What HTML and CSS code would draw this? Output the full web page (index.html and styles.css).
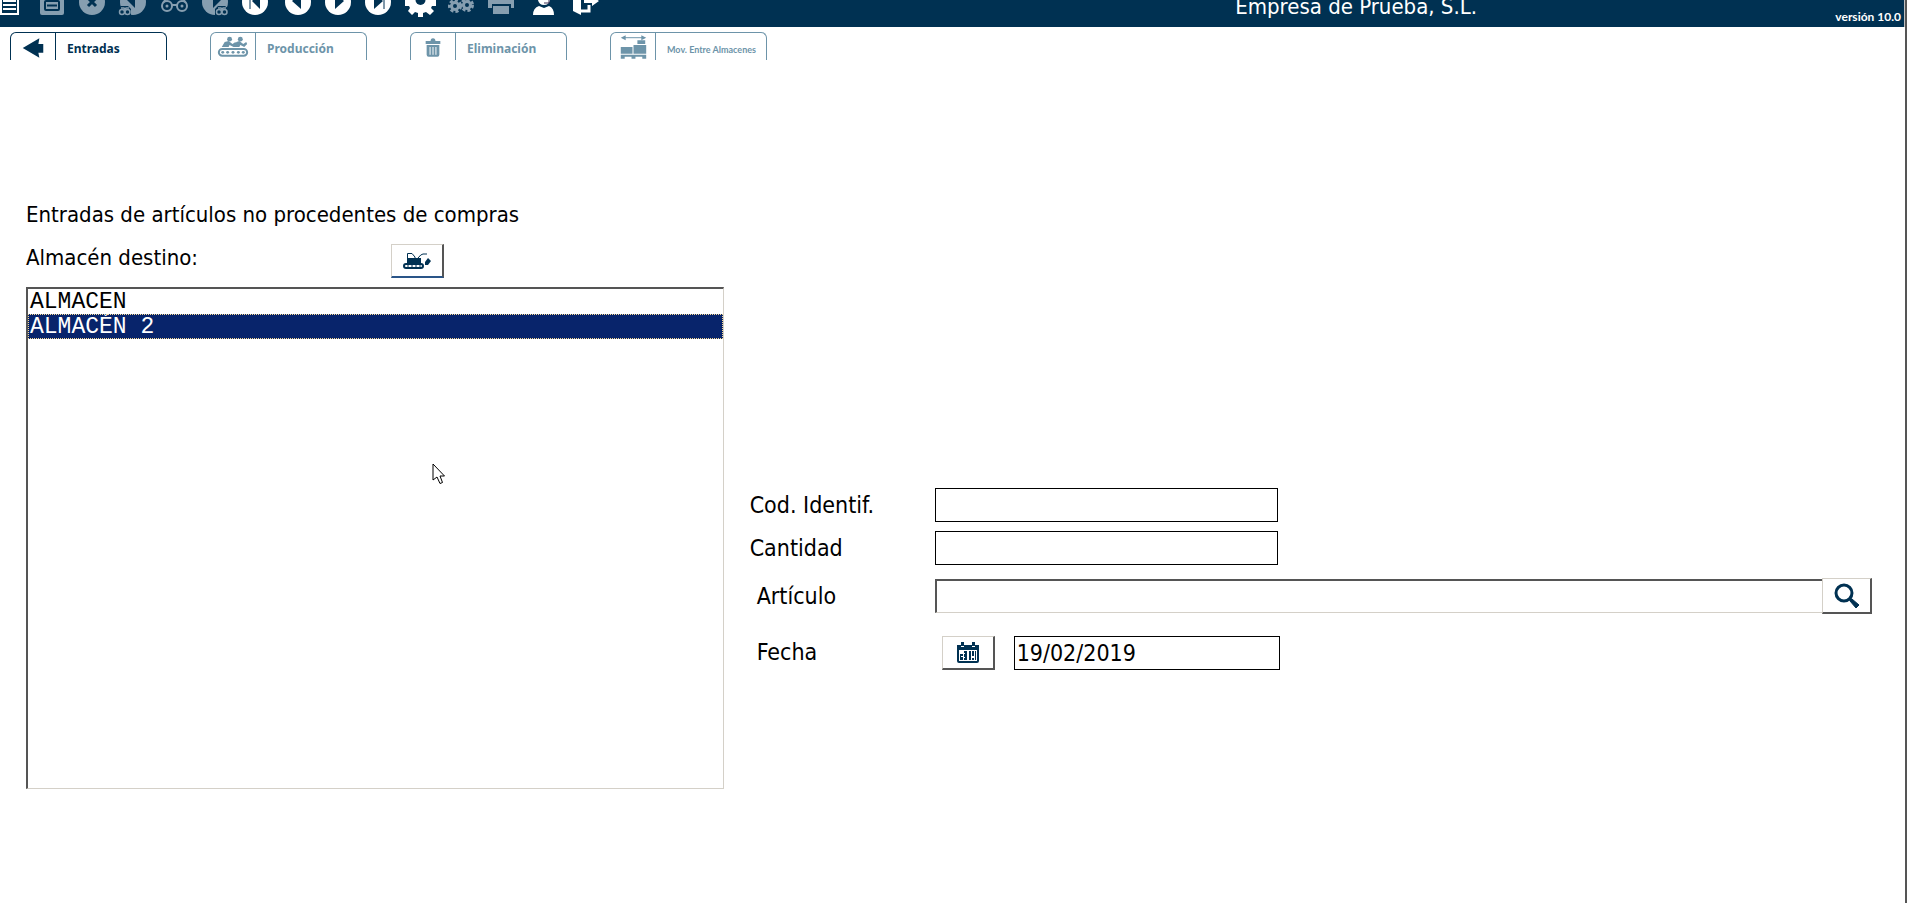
FILE: index.html
```
<!DOCTYPE html>
<html lang="es">
<head>
  <meta charset="UTF-8">
  <meta name="viewport" content="width=device-width, initial-scale=1">
  <title>Entradas de artículos</title>
  <link rel="stylesheet" href="styles.css">
</head>
<body>
  <header class="topbar">
    <div class="toolbar">
      <button type="button" class="tool" aria-label="Nuevo">
        <svg viewBox="0 0 41 27"><path d="M11-5H28V14H11Z" fill="none" stroke="#fff" stroke-width="2"/><path d="M13 1H26M13 5H26M13 9H26" stroke="#fff" stroke-width="2"/></svg>
      </button>
      <button type="button" class="tool off" aria-label="Guardar">
        <svg viewBox="0 0 41 27"><rect x="9" y="-8" width="24" height="23" rx="2"/><rect x="14" y="1" width="14" height="9" rx="1" fill="none" stroke="#003152" stroke-width="2"/><path d="M16 5.500H26" stroke="#003152" stroke-width="2"/></svg>
      </button>
      <button type="button" class="tool off" aria-label="Cancelar">
        <svg viewBox="0 0 41 27"><circle cx="20" cy="2" r="13"/><path d="M16-2L24 6M24-2L16 6" stroke="#003152" stroke-width="3"/></svg>
      </button>
      <button type="button" class="tool off" aria-label="Buscar anterior">
        <svg viewBox="0 0 41 27"><circle cx="20" cy="2" r="13"/><path d="M14 0L22-6V8Z" fill="#003152"/><path d="M5 16V9L8 6H15L18 9V16Z" fill="#003152"/><g fill="none" stroke="#869eb0" stroke-width="1.500"><circle cx="9" cy="12" r="2.500"/><circle cx="14.500" cy="12" r="2.500"/><path d="M8 8H11L12 10L13 8H16"/></g></svg>
      </button>
      <button type="button" class="tool off" aria-label="Buscar">
        <svg viewBox="0 0 41 27"><g fill="none" stroke="#869eb0" stroke-width="2"><circle cx="13" cy="6" r="5"/><circle cx="28" cy="6" r="5"/><path d="M18 5H23M9 3L12-1H15M32 3L29-1H26"/></g><circle cx="13" cy="6" r="1.500"/><circle cx="28" cy="6" r="1.500"/></svg>
      </button>
      <button type="button" class="tool off" aria-label="Buscar siguiente">
        <svg viewBox="0 0 41 27"><circle cx="20" cy="2" r="13"/><path d="M26 0L18-6V8Z" fill="#003152"/><path d="M20 16V9L23 6H30L34 9V16Z" fill="#003152"/><g fill="none" stroke="#869eb0" stroke-width="1.500"><circle cx="24" cy="12" r="2.500"/><circle cx="29.500" cy="12" r="2.500"/><path d="M23 8H26L27 10L28 8H31"/></g></svg>
      </button>
      <button type="button" class="tool" aria-label="Primero">
        <svg viewBox="0 0 41 27"><circle cx="19" cy="2" r="13"/><path d="M14-6V9" stroke="#003152" stroke-width="1"/><path d="M16 1L24-7V9Z" fill="#003152"/></svg>
      </button>
      <button type="button" class="tool" aria-label="Anterior">
        <svg viewBox="0 0 41 27"><circle cx="21" cy="2" r="13"/><path d="M15 1L24-7V9Z" fill="#003152"/></svg>
      </button>
      <button type="button" class="tool" aria-label="Siguiente">
        <svg viewBox="0 0 41 27"><circle cx="20" cy="2" r="13"/><path d="M26 1L17-7V9Z" fill="#003152"/></svg>
      </button>
      <button type="button" class="tool" aria-label="Último">
        <svg viewBox="0 0 41 27"><circle cx="19" cy="2" r="13"/><path d="M25-6V9" stroke="#003152" stroke-width="1"/><path d="M24 1L15-7V9Z" fill="#003152"/></svg>
      </button>
      <button type="button" class="tool" aria-label="Configuración">
        <svg viewBox="0 0 41 27"><path d="M5 0H36V6H32L31 8L34 11L30 15L26 12L23 13V17H18V13L15 12L12 15L8 11L10 8L9 6H5Z"/><circle cx="20.500" cy="0" r="5" fill="#003152"/></svg>
      </button>
      <button type="button" class="tool off" aria-label="Procesos">
        <svg viewBox="0 0 41 27"><g fill="none" stroke="#869eb0" stroke-width="3"><circle cx="14" cy="6" r="3.500"/><circle cx="26" cy="5" r="3.500"/></g><g fill="none" stroke="#869eb0" stroke-width="3" stroke-dasharray="3 2"><circle cx="14" cy="6" r="5.500"/><circle cx="26" cy="5" r="5.500"/></g></svg>
      </button>
      <button type="button" class="tool off" aria-label="Imprimir">
        <svg viewBox="0 0 41 27"><path d="M6-2H32V8H6Z"/><path d="M10 4H29V9H10Z" fill="#003152"/><path d="M11 6H27V14H11Z"/></svg>
      </button>
      <button type="button" class="tool" aria-label="Soporte">
        <svg viewBox="0 0 41 27"><path d="M15-4H27V0Q26 5 21 5T15 0Z"/><path d="M10 15Q10 8 16 6L21 8L26 6Q31 8 31 15Z"/><path d="M26-1V3H21" fill="none" stroke="#403052" stroke-width="1"/></svg>
      </button>
      <button type="button" class="tool" aria-label="Salir">
        <svg viewBox="0 0 41 27"><path d="M9-4H17V15L9 11Z"/><path d="M17 11H25V5" fill="none" stroke="#fff" stroke-width="3"/><path d="M20-1H28V-4L35 1L28 6V3H20Z"/></svg>
      </button>
    </div>
    <div class="company">Empresa de Prueba, S.L.</div>
    <div class="version">versión 10.0</div>
  </header>

  <nav class="tabs">
    <a href="#entradas" class="tab active">
      <svg class="tab-icon" viewBox="0 0 45 27"><path d="M12 15L29 5L28 11H33V20H28L29 25Z"/></svg>
      <span>Entradas</span>
    </a>
    <a href="#produccion" class="tab">
      <svg class="tab-icon" viewBox="0 0 45 27">
        <rect x="8" y="16" width="29" height="7" rx="3.500" fill="none" stroke="#6d94a9" stroke-width="2"/>
        <circle cx="12" cy="19.500" r="1.500"/><circle cx="17" cy="19.500" r="1.500"/><circle cx="22.500" cy="19.500" r="1.500"/><circle cx="28" cy="19.500" r="1.500"/><circle cx="33" cy="19.500" r="1.500"/>
        <circle cx="19" cy="6" r="2.500"/><circle cx="30" cy="6" r="2.500"/>
        <path d="M11 14L14 9L18 8L22 11L25 9L26 11L23 14L19 12L18 14ZM23 14L26 9L29 8L33 11L36 9L37 11L34 14L30 12L29 14Z"/>
      </svg>
      <span>Producción</span>
    </a>
    <a href="#eliminacion" class="tab">
      <svg class="tab-icon" viewBox="0 0 45 27"><path d="M15 8H20Q20 5 22.500 5T25 8H30V11H15ZM16 12H29V22Q29 24 27 24H18Q16 24 16 22Z"/><path d="M19.500 14V22M22.500 14V22M25.500 14V22" stroke="#fff"/></svg>
      <span>Eliminación</span>
    </a>
    <a href="#movimientos" class="tab small">
      <svg class="tab-icon" viewBox="0 0 45 27"><path d="M12 4.500H34" stroke="#6d94a9"/><path d="M10 4.500L15 2V7ZM36 4.500L31 2V7ZM10 14H22V21H10ZM23 12H36V21H23ZM27 7H35V11H27ZM10 22H36V26H32V24H25V26H21V24H14V26H10Z"/></svg>
      <span>Mov. Entre Almacenes</span>
    </a>
  </nav>

  <main class="content">
    <section class="warehouse">
      <h1>Entradas de artículos no procedentes de compras</h1>
      <div class="warehouse-head">
        <label for="almacen">Almacén destino:</label>
        <button type="button" class="btn3d accent" aria-label="Almacenes">
          <svg width="28" height="17" viewBox="0 0 28 17"><path d="M4 6H18V11H4Z"/><path d="M4.500 7V1.500H9L12 5V7M15 6Q18 2 20 2H24" fill="none" stroke="#003152"/><path d="M25 6L28 9L25 13H22V10Z"/><rect x="1" y="12" width="19" height="4" rx="2" fill="none" stroke="#003152" stroke-width="2"/><path d="M5 12V15M9 12V15M13 12V15M17 12V15" stroke="#003152"/></svg>
        </button>
      </div>
      <select id="almacen" class="list" size="8">
        <option>ALMACEN</option>
        <option selected>ALMACÉN 2</option>
      </select>
      <svg class="pointer" width="14" height="22" viewBox="0 0 14 22"><path d="M1 1V17L5 14L8 20.500L10.500 19.500L8 13H12.500Z" fill="#fff" stroke="#000"/></svg>
    </section>

    <form class="entry">
      <div class="row">
        <label for="codigo">Cod. Identif.</label>
        <input type="text" id="codigo" class="field">
      </div>
      <div class="row">
        <label for="cantidad">Cantidad</label>
        <input type="text" id="cantidad" class="field">
      </div>
      <div class="row article">
        <label for="articulo">Artículo</label>
        <input type="text" id="articulo" class="field sunken">
        <button type="button" class="btn3d" aria-label="Buscar artículo">
          <svg width="26" height="26" viewBox="0 0 26 26"><circle cx="10" cy="10" r="8" fill="none" stroke="#003152" stroke-width="3"/><path d="M15 15L18 16L25 22L22 25L16 18Z" stroke="#003152"/></svg>
        </button>
      </div>
      <div class="row date">
        <label for="fecha">Fecha</label>
        <button type="button" class="btn3d" aria-label="Calendario">
          <svg width="22" height="22" viewBox="0 0 22 22"><path d="M0 3H4V0H7V3H15V0H18V3H22V19Q22 21 20 21H2Q0 21 0 19Z"/><path d="M2 8H20V19H2ZM4 4H7V5H4ZM15 4H18V5H15Z" fill="#fff"/><path d="M3 12H6V18H3ZM7 9H10V18H7ZM12 9H14V18H12ZM15 9H17V14H15ZM18 9H19V18H18ZM15 16H17V18H15Z"/><path d="M4 14H6V15H4ZM7 11H8V12H7ZM7 15H8V16H7Z" fill="#fff"/></svg>
        </button>
        <input type="text" id="fecha" class="field" value="19/02/2019">
      </div>
    </form>
  </main>
</body>
</html>
```
FILE: styles.css
```
* {
  box-sizing: border-box;
}

body {
  margin: 0;
  min-height: 100vh;
  display: flex;
  flex-direction: column;
  background: #fff;
  border-right: 2px solid #555;
  color: #000;
  font-family: Tahoma, "DejaVu Sans Condensed", "DejaVu Sans", sans-serif;
  font-size: 23px;
  line-height: 28px;
}

button {
  padding: 0;
  cursor: pointer;
}

/* top bar */
.topbar {
  display: flex;
  height: 27px;
  overflow: hidden;
  background: #003152;
  border-right: 1px solid #c0c0c0;
  color: #fff;
}

.toolbar {
  display: flex;
  flex: 1;
  margin-left: -10px;
}

.tool {
  width: 41px;
  height: 27px;
  border: none;
  background: none;
}

.tool svg {
  display: block;
  width: 41px;
  height: 27px;
  fill: #fff;
}

.tool.off svg {
  fill: #869eb0;
}

.company {
  margin-top: -7px;
  font-size: 22px;
  white-space: nowrap;
}

.version {
  width: 427px;
  padding: 7px 3px 0 0;
  font: bold 12px/20px Lato, sans-serif;
  text-align: right;
}

/* tabs */
.tabs {
  display: flex;
  gap: 43px;
  padding: 5px 10px 0;
}

.tab {
  display: flex;
  width: 157px;
  height: 28px;
  border: 1px solid #6d94a9;
  border-bottom: none;
  border-radius: 6px 6px 0 0;
  color: #6d94a9;
  font: bold 12px/32px "Noto Sans", sans-serif;
  text-decoration: none;
  white-space: nowrap;
}

.tab.active {
  border-color: #003152;
  color: #003152;
}

.tab-icon {
  flex: none;
  width: 45px;
  height: 27px;
  margin-right: 11px;
  border-right: 1px solid currentColor;
  fill: currentColor;
}

.tab.small {
  font: bold 9px/34px Lato, sans-serif;
}

/* content */
.content {
  flex: 1;
  display: grid;
  grid-template-columns: minmax(0, 23fr) minmax(0, 37fr);
  gap: 26px;
  padding: 141px 33px 114px 26px;
}

.warehouse {
  position: relative;
  display: flex;
  flex-direction: column;
  font-size: 22px;
}

h1 {
  margin: 0 0 15px;
  font-size: 22px;
  font-weight: normal;
  line-height: 28px;
}

.warehouse-head {
  display: flex;
  justify-content: space-between;
  width: 418px;
  margin-bottom: 9px;
}

.btn3d {
  display: flex;
  align-items: center;
  justify-content: center;
  flex: none;
  width: 53px;
  height: 34px;
  background: #fff;
  border: 1px solid #d4d0c8;
  border-right: 2px solid #555;
  border-bottom: 2px solid #555;
}

.btn3d svg {
  fill: #003152;
}

.btn3d.accent {
  border-bottom-color: #2a5588;
}

.list {
  flex: 1;
  padding: 0;
  background: #fff;
  border: 2px solid #555;
  border-right: 1px solid #d4d0c8;
  border-bottom: 1px solid #d4d0c8;
  border-radius: 0;
  outline: none;
  font: 23px/25px "Courier New", "Liberation Mono", monospace;
  overflow: hidden;
}

.list option {
  height: 25px;
  min-height: 25px;
  padding: 0 2px;
  color: #000;
}

.list option:checked {
  background: #08246b;
  color: #fff;
  outline: 1px dotted #f7db94;
  outline-offset: -1px;
}

.pointer {
  position: absolute;
  left: 406px;
  top: 262px;
}

/* entry form */
.entry {
  display: flex;
  flex-direction: column;
  gap: 9px;
  padding-top: 287px;
}

.row {
  display: flex;
  align-items: center;
}

.row label {
  flex: none;
  width: 185px;
}

.field {
  width: 343px;
  height: 34px;
  padding: 0 2px;
  background: #fff;
  border: 1px solid #000;
  border-radius: 0;
  font: inherit;
}

.article {
  margin-top: 4px;
}

.article label,
.date label {
  padding-left: 7px;
}

.sunken {
  flex: 1;
  border: 2px solid #555;
  border-right: none;
  border-bottom: 1px solid #d4d0c8;
}

.article .btn3d {
  width: 50px;
  height: 36px;
}

.date {
  margin-top: 13px;
}

.date label {
  width: 192px;
  padding-bottom: 3px;
}

.date .field {
  width: 266px;
  margin-left: 19px;
}
```
